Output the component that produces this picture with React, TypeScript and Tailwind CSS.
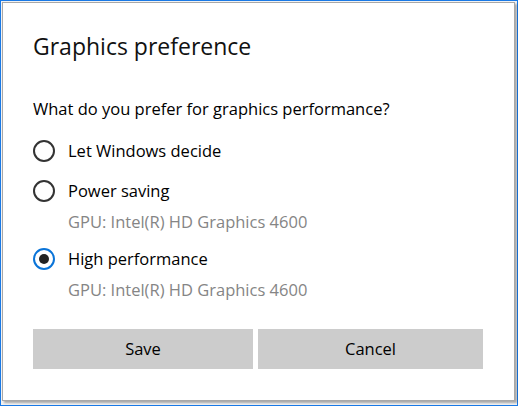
import React from 'react'

// Windows "Graphics preference" dialog

const font = { fontFamily: '"Open Sans", "Noto Sans", "Liberation Sans", sans-serif' }

function Radio({ checked }: { checked?: boolean }) {
  return checked ? (
    <span className="w-[22px] h-[22px] rounded-full border-2 border-[#0a74d8] flex items-center justify-center shrink-0">
      <span className="w-[10px] h-[10px] rounded-full bg-[#222]" />
    </span>
  ) : (
    <span className="w-[22px] h-[22px] rounded-full border-2 border-[#333] shrink-0" />
  )
}

function Option({ label, gpu, checked }: { label: string; gpu?: string; checked?: boolean }) {
  return (
    <div>
      <div className="flex items-center gap-[13px] h-[22px]">
        <Radio checked={checked} />
        <span className="text-[16.5px] leading-[22px] text-black">{label}</span>
      </div>
      {gpu && <div className="pl-[35px] mt-[9px] text-[16.5px] leading-[22px] text-[#858585]">{gpu}</div>}
    </div>
  )
}

export default function App() {
  return (
    <div className="w-[518px] h-[406px] border border-[#1979e6] bg-[#f2f2f2] pt-[1px] pl-[1px]" style={font}>
      <div className="w-[513px] h-[399px] bg-white border border-[#a8a8a8] shadow-[2px_2px_2px_rgba(0,0,0,0.3)] flex flex-col pl-[30px] pr-[30px]">
        <h1 className="mt-[27px] text-[23px] font-normal text-[#111] leading-[32px]">Graphics preference</h1>
        <p className="mt-[36px] text-[16.5px] text-black leading-[22px]">What do you prefer for graphics performance?</p>
        <div className="mt-[20px] flex flex-col">
          <Option label="Let Windows decide" />
          <div className="mt-[18px]">
            <Option label="Power saving" gpu="GPU: Intel(R) HD Graphics 4600" />
          </div>
          <div className="mt-[15px]">
            <Option label="High performance" gpu="GPU: Intel(R) HD Graphics 4600" checked />
          </div>
        </div>
        <div className="mt-[28px] flex gap-[5px]">
          <button className="w-[220px] h-[40px] bg-[#cccccc] text-[16.5px] text-black">Save</button>
          <button className="w-[225px] h-[40px] bg-[#cccccc] text-[16.5px] text-black">Cancel</button>
        </div>
      </div>
    </div>
  )
}
